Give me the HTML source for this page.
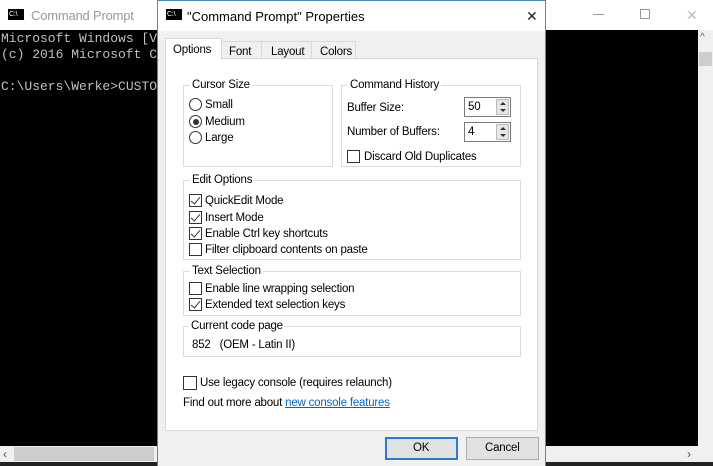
<!DOCTYPE html>
<html><head><style>
*{margin:0;padding:0;box-sizing:border-box}
body{width:713px;height:466px;overflow:hidden;position:relative;background:#000;font-family:"Liberation Sans",sans-serif;font-size:11.5px;letter-spacing:-0.2px;color:#000}
.a{position:absolute}
.mono{font-family:"Liberation Mono",monospace;color:#c0c0c0;font-size:13px;letter-spacing:0;line-height:16px;white-space:pre}
.grp{position:absolute;border:1px solid #dcdcdc}
.lg{position:absolute;top:-7px;left:6px;background:#fff;padding:0 2px;color:#000}
.cb{position:absolute;width:13px;height:13px;border:1px solid #333;background:#fff}
.cb.c::after{content:"";position:absolute;left:3px;top:0px;width:4px;height:8px;border:solid #333;border-width:0 1.3px 1.3px 0;transform:rotate(40deg)}
.rb{position:absolute;width:13px;height:13px;border:1px solid #333;border-radius:50%;background:#fff}
.rb.c::after{content:"";position:absolute;left:2.5px;top:2.5px;width:6px;height:6px;border-radius:50%;background:#333}
.t{position:absolute;white-space:nowrap;padding-top:1.5px}
.spin{position:absolute;width:47px;height:20px;border:1px solid #7a7a7a;background:#fff}
.spin span{position:absolute;left:3px;top:3px}
.spin i{position:absolute;right:1px;top:1px;width:13px;height:16px;background:#e6e6e6;border:1px solid #bbb}
.spin i::before{content:"";position:absolute;left:3px;top:2px;border:3px solid transparent;border-bottom:3px solid #333;border-top:0}
.spin i::after{content:"";position:absolute;left:3px;top:9px;border:3px solid transparent;border-top:3px solid #333;border-bottom:0}
</style></head><body>
<div class="a" style="left:0;top:0;width:713px;height:30px;background:#fff"></div>
<div class="a" style="left:8px;top:9px;width:16px;height:11px;background:#000"><div style="color:#fff;font-size:7px;line-height:11px;padding-left:1px">C:\</div></div>
<div class="t" style="left:31px;top:6px;font-size:13px;color:#999">Command Prompt</div>
<div class="a" style="left:593px;top:14px;width:11px;height:1px;background:#999"></div>
<div class="a" style="left:640px;top:9px;width:10px;height:10px;border:1px solid #999"></div>
<div class="t" style="left:686px;top:5px;font-size:14px;color:#bbb">✕</div>
<div class="a mono" style="left:1px;top:31px">Microsoft Windows [V
(c) 2016 Microsoft C

C:\Users\Werke>CUSTO</div>
<div class="a" style="left:698px;top:30px;width:15px;height:416px;background:#f0f0f0"></div>
<div class="a" style="left:699px;top:52px;width:13px;height:14px;background:#cdcdcd"></div>
<div class="t" style="left:700px;top:30px;font-size:10px;color:#555">^</div>
<div class="a" style="left:0;top:446px;width:713px;height:16px;background:#f0f0f0"></div>
<div class="a" style="left:14px;top:447px;width:140px;height:14px;background:#cdcdcd"></div>
<div class="t" style="left:3px;top:445px;font-size:12px;color:#555">‹</div>
<div class="t" style="left:687px;top:445px;font-size:12px;color:#555">›</div>
<div class="a" style="left:0;top:462px;width:713px;height:4px;background:#222"></div>

<div class="a" style="left:157px;top:0;width:389px;height:466px;background:#f0f0f0;border:1px solid #4a8ac0;border-bottom:none"></div>
<div class="a" style="left:158px;top:1px;width:387px;height:30px;background:#fff"></div>
<div class="a" style="left:166px;top:9px;width:16px;height:11px;background:#000"><div style="color:#fff;font-size:7px;line-height:11px;padding-left:1px">C:\</div></div>
<div class="t" style="left:187px;top:7px;font-size:13px;letter-spacing:0">"Command Prompt" Properties</div>
<div class="t" style="left:526px;top:6px;font-size:14px;color:#222">✕</div>

<div class="a" style="left:221px;top:41px;width:41px;height:18px;border:1px solid #d9d9d9;background:#f0f0f0"></div>
<div class="a" style="left:261px;top:41px;width:51px;height:18px;border:1px solid #d9d9d9;background:#f0f0f0"></div>
<div class="a" style="left:311px;top:41px;width:45px;height:18px;border:1px solid #d9d9d9;background:#f0f0f0"></div>
<div class="a" style="left:165px;top:58px;width:373px;height:373px;background:#fff;border:1px solid #d9d9d9"></div>
<div class="a" style="left:165px;top:38px;width:57px;height:22px;border:1px solid #d9d9d9;border-bottom:none;background:#fff"></div>
<div class="t" style="left:173px;top:42px">Options</div>
<div class="t" style="left:229px;top:44px">Font</div>
<div class="t" style="left:271px;top:44px">Layout</div>
<div class="t" style="left:320px;top:44px">Colors</div>

<div class="grp" style="left:183px;top:85px;width:150px;height:82px"><div class="lg">Cursor Size</div></div>
<div class="rb" style="left:189px;top:98px"></div><div class="t" style="left:205px;top:97px">Small</div>
<div class="rb c" style="left:189px;top:115px"></div><div class="t" style="left:205px;top:114px">Medium</div>
<div class="rb" style="left:189px;top:131px"></div><div class="t" style="left:205px;top:130px">Large</div>

<div class="grp" style="left:341px;top:85px;width:180px;height:82px"><div class="lg">Command History</div></div>
<div class="t" style="left:347px;top:100px">Buffer Size:</div>
<div class="spin" style="left:464px;top:97px"><span>50</span><i></i></div>
<div class="t" style="left:347px;top:124px">Number of Buffers:</div>
<div class="spin" style="left:464px;top:122px"><span>4</span><i></i></div>
<div class="cb" style="left:347px;top:150px"></div><div class="t" style="left:364px;top:149px">Discard Old Duplicates</div>

<div class="grp" style="left:183px;top:180px;width:338px;height:80px"><div class="lg">Edit Options</div></div>
<div class="cb c" style="left:189px;top:194px"></div><div class="t" style="left:205px;top:193px">QuickEdit Mode</div>
<div class="cb c" style="left:189px;top:211px"></div><div class="t" style="left:205px;top:210px">Insert Mode</div>
<div class="cb c" style="left:189px;top:227px"></div><div class="t" style="left:205px;top:226px">Enable Ctrl key shortcuts</div>
<div class="cb" style="left:189px;top:243px"></div><div class="t" style="left:205px;top:242px">Filter clipboard contents on paste</div>

<div class="grp" style="left:183px;top:271px;width:338px;height:45px"><div class="lg">Text Selection</div></div>
<div class="cb" style="left:189px;top:282px"></div><div class="t" style="left:205px;top:281px">Enable line wrapping selection</div>
<div class="cb c" style="left:189px;top:298px"></div><div class="t" style="left:205px;top:297px">Extended text selection keys</div>

<div class="grp" style="left:183px;top:326px;width:338px;height:31px"><div class="lg" style="left:5px">Current code page</div></div>
<div class="t" style="left:192px;top:337px">852&nbsp;&nbsp;&nbsp;(OEM - Latin II)</div>

<div class="cb" style="left:183px;top:376px;width:14px;height:14px"></div><div class="t" style="left:200px;top:375px">Use legacy console (requires relaunch)</div>
<div class="t" style="left:183px;top:395px">Find out more about <span style="color:#0066cc;text-decoration:underline">new console features</span></div>

<div class="a" style="left:385px;top:437px;width:73px;height:23px;background:#e1e1e1;border:2px solid #2a7ad0"></div>
<div class="t" style="left:413px;top:440px">OK</div>
<div class="a" style="left:466px;top:437px;width:73px;height:23px;background:#e1e1e1;border:1px solid #adadad"></div>
<div class="t" style="left:485px;top:440px">Cancel</div>
</body></html>
